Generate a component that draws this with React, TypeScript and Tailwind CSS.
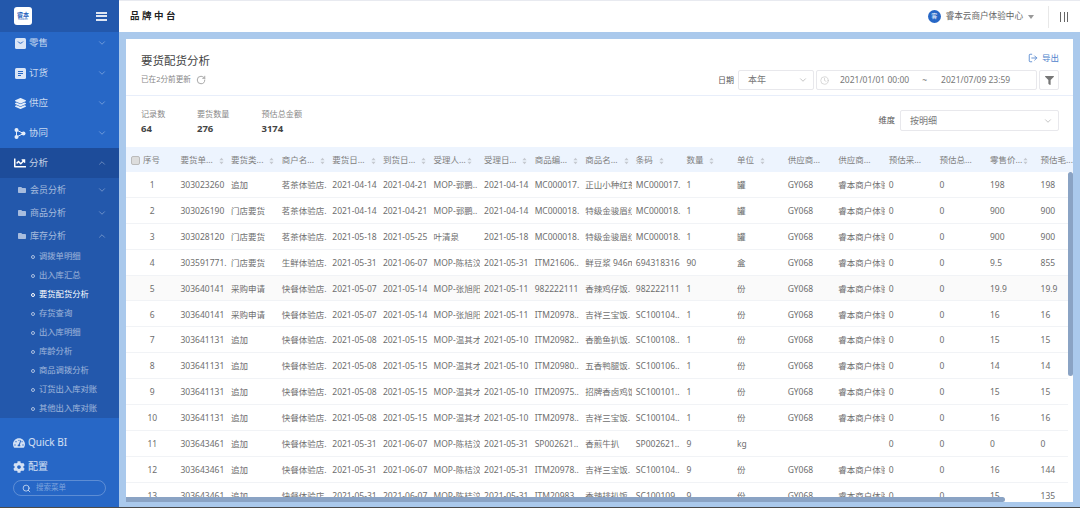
import { ChevronDown, ChevronUp, Clock, LogOut, RotateCw, Search } from 'lucide-react';
import { FaChartLine, FaCog, FaFilter, FaFolder, FaLayerGroup, FaTachometerAlt } from 'react-icons/fa';

const font = '[font-family:"Noto_Sans","Noto_Sans_CJK_SC",sans-serif]';

const columns = [
  '要货单...', '要货类...', '商户名...', '要货日...', '到货日...', '受理人...', '受理日...', '商品编...', '商品名...',
  '条码', '数量', '单位', '供应商...', '供应商...', '预估采...', '预估总...', '零售价...', '预估毛...',
];
// 0 = no sort arrows, 1 = arrows after a gap, 2 = arrows right against the text
const sortable = [1, 1, 1, 1, 1, 2, 1, 1, 1, 1, 1, 1, 0, 0, 0, 0, 2, 0];

const S = '睿本商户体验';
const rows = [
  ['1', '303023260', '追加', '茗茶体验店.', '2021-04-14', '2021-04-21', 'MOP-郭鹏..', '2021-04-14', 'MC000017.', '正山小种红茶', 'MC000017.', '1', '罐', 'GY068', S, '0', '0', '198', '198'],
  ['2', '303026190', '门店要货', '茗茶体验店.', '2021-04-14', '2021-04-21', 'MOP-郭鹏..', '2021-04-14', 'MC000018.', '特级金骏眉红', 'MC000018.', '1', '罐', 'GY068', S, '0', '0', '900', '900'],
  ['3', '303028120', '门店要货', '茗茶体验店.', '2021-05-18', '2021-05-25', '叶清泉', '2021-05-18', 'MC000018.', '特级金骏眉红', 'MC000018.', '1', '罐', 'GY068', S, '0', '0', '900', '900'],
  ['4', '303591771.', '门店要货', '生鲜体验店.', '2021-05-31', '2021-06-07', 'MOP-陈桔汶', '2021-05-31', 'ITM21606..', '鲜豆浆 946ml', '694318316', '90', '盒', 'GY068', S, '0', '0', '9.5', '855'],
  ['5', '303640141', '采购申请', '快餐体验店.', '2021-05-07', '2021-05-14', 'MOP-张旭阳', '2021-05-11', '982222111', '香辣鸡仔饭.', '982222111', '1', '份', 'GY068', S, '0', '0', '19.9', '19.9'],
  ['6', '303640141', '采购申请', '快餐体验店.', '2021-05-07', '2021-05-14', 'MOP-张旭阳', '2021-05-11', 'ITM20978..', '吉祥三宝饭.', 'SC100104..', '1', '份', 'GY068', S, '0', '0', '16', '16'],
  ['7', '303641131', '追加', '快餐体验店.', '2021-05-08', '2021-05-15', 'MOP-温其才', '2021-05-10', 'ITM20982..', '香脆鱼扒饭.', 'SC100108..', '1', '份', 'GY068', S, '0', '0', '15', '15'],
  ['8', '303641131', '追加', '快餐体验店.', '2021-05-08', '2021-05-15', 'MOP-温其才', '2021-05-10', 'ITM20980..', '五香鸭腿饭.', 'SC100106..', '1', '份', 'GY068', S, '0', '0', '14', '14'],
  ['9', '303641131', '追加', '快餐体验店.', '2021-05-08', '2021-05-15', 'MOP-温其才', '2021-05-10', 'ITM20975..', '招牌香卤鸡饭', 'SC100101..', '1', '份', 'GY068', S, '0', '0', '15', '15'],
  ['10', '303641131', '追加', '快餐体验店.', '2021-05-08', '2021-05-15', 'MOP-温其才', '2021-05-10', 'ITM20978..', '吉祥三宝饭.', 'SC100104..', '1', '份', 'GY068', S, '0', '0', '16', '16'],
  ['11', '303643461', '追加', '快餐体验店.', '2021-05-31', '2021-06-07', 'MOP-陈桔汶', '2021-05-31', 'SP002621..', '香煎牛扒', 'SP002621..', '9', 'kg', '', '', '0', '0', '0', '0'],
  ['12', '303643461', '追加', '快餐体验店.', '2021-05-31', '2021-06-07', 'MOP-陈桔汶', '2021-05-31', 'ITM20978..', '吉祥三宝饭.', 'SC100104..', '9', '份', 'GY068', S, '0', '0', '16', '144'],
  ['13', '303643461', '追加', '快餐体验店.', '2021-05-31', '2021-06-07', 'MOP-陈桔汶', '2021-05-31', 'ITM20983..', '香辣排扒饭.', 'SC100109..', '9', '份', 'GY068', S, '0', '0', '15', '135'],
];

const gridCols = 'grid grid-cols-[50.5px_repeat(18,50.6px)]';

function SortIcon({ tight }: { tight: boolean }) {
  return (
    <svg width="5" height="8" viewBox="0 0 6 9" className={`shrink-0 ${tight ? 'ml-[1px]' : 'ml-[6px]'}`}>
      <path d="M3 0.5 L5.5 3.5 H0.5 Z M3 8.5 L0.5 5.5 H5.5 Z" fill="#c5c9d0" />
    </svg>
  );
}

function Logo() {
  return (
    <div className="w-[18px] h-[18px] rounded-[3px] bg-white flex flex-col items-center justify-center leading-none">
      <span className="text-[6px] font-bold text-[#2a64bd]">睿本</span>
      <span className="text-[3px] text-[#2a64bd]">Ruiben</span>
    </div>
  );
}

function RetailIcon() {
  return (
    <svg width="11" height="11" viewBox="0 0 11 11">
      <rect width="11" height="11" rx="1.5" fill="#dbe6f6" />
      <path d="M3 3.5 Q5.5 7 8 3.5" fill="none" stroke="#2767c6" strokeWidth="1" />
    </svg>
  );
}

function OrderIcon() {
  return (
    <svg width="11" height="11" viewBox="0 0 11 11">
      <rect width="11" height="11" rx="1.5" fill="#dbe6f6" />
      <path d="M3 3.5 H8 M3 5.5 H8 M3 7.5 H6" stroke="#2767c6" strokeWidth="1" />
    </svg>
  );
}

function SyncIcon() {
  return (
    <svg width="12" height="11" viewBox="0 0 12 11">
      <path d="M2.5 2 L9.5 5.5 L2.5 9 Z" fill="none" stroke="#e6eefa" strokeWidth="1" />
      <circle cx="2.5" cy="2" r="2" fill="#e6eefa" />
      <circle cx="2.5" cy="9" r="2" fill="#e6eefa" />
      <circle cx="9.5" cy="5.5" r="2" fill="#e6eefa" />
    </svg>
  );
}

function Chevron({ open }: { open?: boolean }) {
  return open ? <ChevronUp size={10} className="text-white/40" /> : <ChevronDown size={10} className="text-white/40" />;
}

function MenuRow({ icon, label, open, dark }: { icon: React.ReactNode; label: string; open?: boolean; dark?: boolean }) {
  return (
    <div className={`h-[30px] flex items-center pl-[14px] pr-[12px] text-white/75 text-[9.5px] ${dark ? 'bg-[#1d4c9a]' : ''}`}>
      <span className="w-[12px] flex justify-center mr-[3px]">{icon}</span>
      <span className="flex-1">{label}</span>
      <Chevron open={open} />
    </div>
  );
}

function SubRow({ label, open }: { label: string; open?: boolean }) {
  return (
    <div className="h-[23px] flex items-center pl-[18px] pr-[12px] text-white/60 text-[9px]">
      <FaFolder size={8} className="mr-[4px]" />
      <span className="flex-1">{label}</span>
      <Chevron open={open} />
    </div>
  );
}

function LeafRow({ label, active }: { label: string; active?: boolean }) {
  return (
    <div className={`h-[19px] flex items-center pl-[31px] text-[8.3px] ${active ? 'text-white' : 'text-white/55'}`}>
      <span className={`w-[4px] h-[4px] rounded-full border mr-[4px] ${active ? 'border-white' : 'border-white/60'}`} />
      {label}
    </div>
  );
}

function Sidebar() {
  return (
    <aside className="w-[119px] h-full shrink-0 bg-[#2767c6] flex flex-col">
      <div className="h-[32px] shrink-0 bg-[#2358ac] flex items-center justify-between pl-[14px] pr-[12px]">
        <Logo />
        <div className="flex flex-col gap-[1.5px] w-[11px]">
          <span className="h-[2px] bg-white/85" />
          <span className="h-[2px] bg-white/85" />
          <span className="h-[2px] bg-white/85" />
        </div>
      </div>
      <div className="flex-1 overflow-hidden">
        <div className="-mt-[4px]">
          <MenuRow label="零售" icon={<RetailIcon />} />
          <MenuRow label="订货" icon={<OrderIcon />} />
          <MenuRow label="供应" icon={<FaLayerGroup size={11} className="text-[#e6eefa]" />} />
          <MenuRow label="协同" icon={<SyncIcon />} />
          <MenuRow label="分析" open dark icon={<FaChartLine size={12} className="text-white" />} />
          <div className="bg-[#2358ac] h-[240px]">
            <SubRow label="会员分析" />
            <SubRow label="商品分析" />
            <SubRow label="库存分析" open />
            <LeafRow label="调拨单明细" />
            <LeafRow label="出入库汇总" />
            <LeafRow label="要货配货分析" active />
            <LeafRow label="存货查询" />
            <LeafRow label="出入库明细" />
            <LeafRow label="库龄分析" />
            <LeafRow label="商品调拨分析" />
            <LeafRow label="订货出入库对账" />
            <LeafRow label="其他出入库对账" />
          </div>
        </div>
      </div>
      <div className="h-[89px] shrink-0 bg-[#2767c6] text-white/80">
        <div className="h-[25px] mt-[12px] flex items-center pl-[13px] gap-[3px] text-[10px]">
          <FaTachometerAlt size={12} />
          Quick BI
        </div>
        <div className="h-[23px] flex items-center pl-[13px] gap-[3px] text-[10px]">
          <FaCog size={12} />
          配置
        </div>
        <div className="mx-[13px] mt-[2px] h-[16px] rounded-full border border-white/25 flex items-center pl-[8px] gap-[5px] text-[7.5px] text-white/40">
          <Search size={9} className="text-white/85" />
          搜索菜单
        </div>
      </div>
    </aside>
  );
}

function TopBar() {
  return (
    <header className="h-[32px] shrink-0 bg-white border-t border-[#e8eaf0] flex items-center pl-[11px] pr-[12px]">
      <span className="text-[9.5px] font-bold tracking-[2.5px] text-[#222]">品牌中台</span>
      <div className="ml-auto flex items-center text-[8.6px] text-[#666]">
        <span className="w-[13px] h-[13px] rounded-full bg-[#2767c6] text-white text-[6px] flex items-center justify-center mr-[5px]">客</span>
        睿本云商户体验中心
        <span className="ml-[5px] border-x-[3px] border-x-transparent border-t-[4px] border-t-[#999]" />
        <span className="w-px h-[22px] bg-[#e8e8e8] ml-[14px] mr-[11px]" />
        <div className="flex gap-[2.5px]">
          <span className="w-px h-[10px] bg-[#666]" />
          <span className="w-px h-[10px] bg-[#666]" />
          <span className="w-px h-[10px] bg-[#666]" />
        </div>
      </div>
    </header>
  );
}

function Select({ label, className }: { label: string; className: string }) {
  return (
    <div className={`h-[20px] border border-[#e8e8ec] rounded-[2px] flex items-center justify-between pl-[9px] pr-[5px] text-[9px] text-[#777] ${className}`}>
      {label}
      <ChevronDown size={10} className="text-[#bbb]" />
    </div>
  );
}

function Filters() {
  return (
    <div className="h-[57px] shrink-0 border-b border-[#e8eefa] flex justify-between pl-[15px] pr-[14px] pt-[12px]">
      <div>
        <div className="text-[11.5px] leading-[17px] text-[#444] mt-[1px]">要货配货分析</div>
        <div className="mt-[5px] flex items-center gap-[5px] text-[7.6px] text-[#888]">
          已在2分前更新
          <RotateCw size={10} className="text-[#999]" />
        </div>
      </div>
      <div className="flex flex-col items-end">
        <div className="flex items-center gap-[4px] text-[8.5px] text-[#4f83cc] h-[14px]">
          <LogOut size={10} />
          导出
        </div>
        <div className="mt-[5px] flex items-center gap-[2px]">
          <span className="text-[8px] text-[#555] mr-[2px]">日期</span>
          <Select label="本年" className="w-[76px]" />
          <div className="w-[221px] h-[20px] border border-[#e8e8ec] rounded-[2px] flex items-center pl-[3px] text-[8.5px] text-[#777]">
            <Clock size={9} className="text-[#ccc]" />
            <span className="ml-[11px]">2021/01/01 00:00</span>
            <span className="ml-[13px]">~</span>
            <span className="ml-[14px]">2021/07/09 23:59</span>
          </div>
          <div className="w-[20px] h-[20px] border border-[#e8e8ec] rounded-[2px] flex items-center justify-center">
            <FaFilter size={9} className="text-[#777]" />
          </div>
        </div>
      </div>
    </div>
  );
}

function Stat({ label, value, className }: { label: string; value: string; className: string }) {
  return (
    <div className={className}>
      <div className="text-[8.1px] leading-[12px] text-[#888]">{label}</div>
      <div className="mt-[3px] text-[9.5px] leading-[12px] font-bold text-[#444]">{value}</div>
    </div>
  );
}

function Summary() {
  return (
    <div className="h-[51px] shrink-0 flex items-start pl-[15px] pr-[14px] pt-[12px]">
      <Stat label="记录数" value="64" className="w-[56px]" />
      <Stat label="要货数量" value="276" className="w-[64.5px]" />
      <Stat label="预估总金额" value="3174" className="w-[70px]" />
      <div className="ml-auto mt-[2px] flex items-center gap-[5px]">
        <span className="text-[8.3px] text-[#555]">维度</span>
        <Select label="按明细" className="w-[159px] h-[21px]" />
      </div>
    </div>
  );
}

function DataTable() {
  return (
    <div className="relative flex-1 overflow-hidden">
      <div className={`${gridCols} h-[25px] pt-[2px] bg-[#edf4fe] items-center text-[8.5px] text-[#808080]`}>
        <div className="flex items-center pl-[5px] gap-[3px]">
          <span className="w-[9px] h-[9px] rounded-[2px] border border-[#bbb] bg-[#ddd]" />
          序号
        </div>
        {columns.map((c, i) => (
          <div key={i} className="flex items-center pl-[4px] overflow-hidden whitespace-nowrap">
            {c}
            {sortable[i] > 0 && <SortIcon tight={sortable[i] === 2} />}
          </div>
        ))}
      </div>
      <div className="mr-[5px]">
        {rows.map((r, i) => (
          <div key={i} className={`${gridCols} h-[25.9px] pt-[2px] border-b border-[#f1f3f6] items-center text-[8.5px] text-[#6e6e6e] overflow-hidden ${i === 4 ? 'bg-[#fafafa]' : ''}`}>
            {r.map((v, j) => (
              <div key={j} className={`whitespace-nowrap overflow-hidden ${j === 0 ? 'text-center pl-[2px]' : 'pl-[4px] pr-[2px]'}`}>
                {v}
              </div>
            ))}
          </div>
        ))}
      </div>
      <span className="absolute right-0 top-[25px] w-[5px] h-[204px] rounded-[3px] bg-[#8aa3c4]" />
      <span className="absolute left-0 bottom-0 w-[879px] h-[5px] rounded-r-[3px] bg-[#8aa3c4]" />
    </div>
  );
}

export default function App() {
  return (
    <div className={`w-[1080px] h-[508px] overflow-hidden flex flex-col bg-[#aac9ec] ${font}`}>
      <div className="flex-1 min-h-0 flex">
        <Sidebar />
        <main className="flex-1 flex flex-col min-w-0">
          <TopBar />
          <div className="flex-1 min-h-0 pl-[7px] pr-[7px] pt-[7px] pb-[5px]">
            <div className="h-full bg-white flex flex-col overflow-hidden">
              <Filters />
              <Summary />
              <DataTable />
            </div>
          </div>
        </main>
      </div>
      <div className="h-px shrink-0 bg-[#4a4a4a]" />
    </div>
  );
}
